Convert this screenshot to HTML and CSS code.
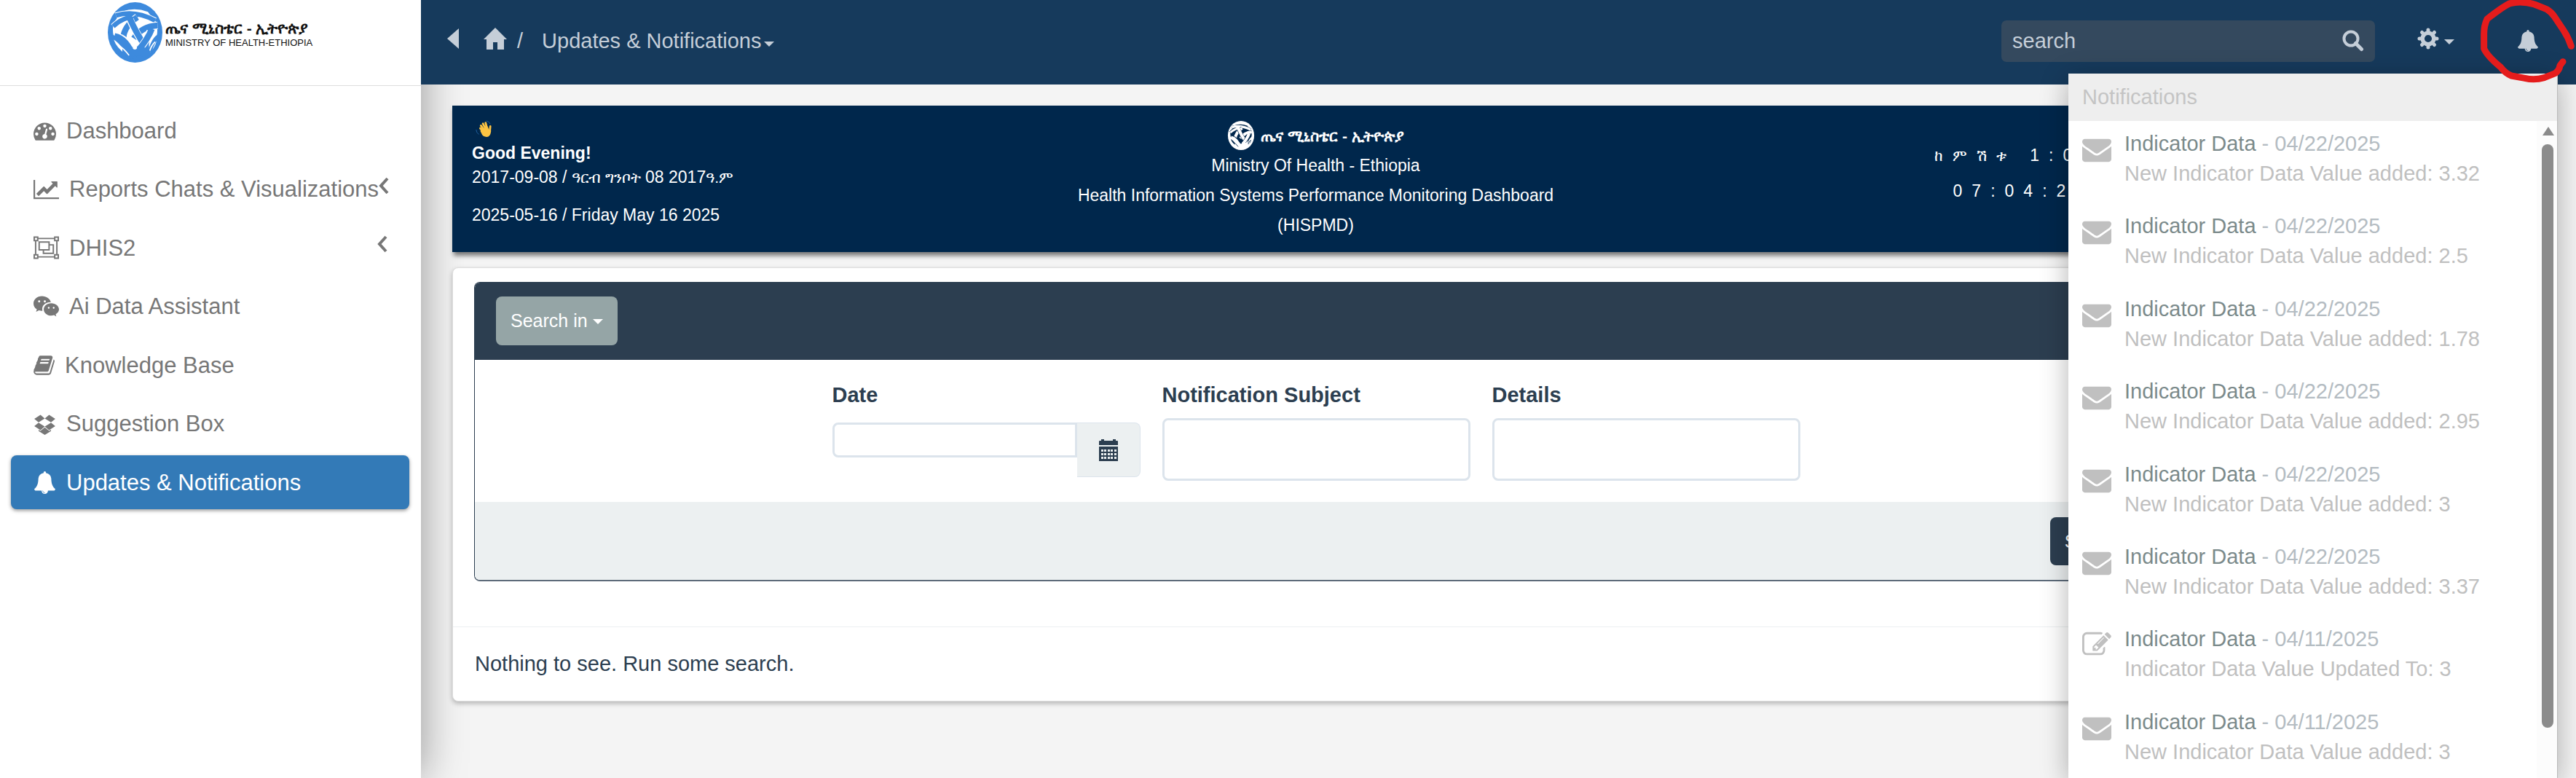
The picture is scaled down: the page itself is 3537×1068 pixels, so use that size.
FILE: index.html
```
<!DOCTYPE html>
<html lang="en">
<head>
<meta charset="utf-8">
<title>Updates &amp; Notifications</title>
<link rel="stylesheet" href="styles.css">
</head>
<body>
<svg class="sprite" aria-hidden="true">
  <symbol id="i-dash" viewBox="0 0 1792 1792"><path d="M384 1152q0-53-37.500-90.500t-90.500-37.500-90.500 37.500-37.500 90.500 37.500 90.500 90.500 37.500 90.500-37.500 37.500-90.500zm192-448q0-53-37.500-90.500t-90.500-37.500-90.500 37.500-37.500 90.500 37.500 90.500 90.500 37.500 90.500-37.500 37.500-90.500zm428 481l101-382q6-26-7.500-48.500t-38.500-29.500-48 6.500-30 39.500l-101 382q-60 5-107 43.500t-63 98.500q-20 77 20 146t117 89 146-20 89-117q16-60-6-117t-72-91zm660-33q0-53-37.500-90.500t-90.500-37.500-90.500 37.500-37.500 90.500 37.500 90.500 90.500 37.500 90.500-37.500 37.500-90.500zm-640-640q0-53-37.500-90.500t-90.500-37.500-90.500 37.500-37.500 90.500 37.500 90.500 90.500 37.500 90.500-37.500 37.500-90.500zm448 192q0-53-37.500-90.500t-90.500-37.500-90.500 37.500-37.500 90.500 37.500 90.500 90.500 37.500 90.500-37.500 37.500-90.500zm320 448q0 261-141 483-19 29-54 29h-1402q-35 0-54-29-141-221-141-483 0-182 71-348t191-286 286-191 348-71 348 71 286 191 191 286 71 348z"/></symbol>
  <symbol id="i-chart" viewBox="0 0 2048 1792"><path d="M2048 1536v128h-2048v-1536h128v1408h1920zm-128-1248v435q0 21-19.500 29.500t-35.500-7.500l-121-121-633 633q-10 10-23 10t-23-10l-233-233-416 416-192-192 585-585q10-10 23-10t23 10l233 233 464-464-121-121q-16-16-7.500-35.500t29.500-19.500h435q14 0 23 9t9 23z"/></symbol>
  <symbol id="i-group" viewBox="0 0 36 32"><g fill="none" stroke="currentColor" stroke-width="2"><path d="M3 6v20M33 6v20M6 3h24M6 29h24"/><path d="M1 1h5v5h-5zM30 1h5v5h-5zM1 26h5v5h-5zM30 26h5v5h-5zM8 8h14v11h-14zM22 12h6v12h-14v-5"/></g></symbol>
  <symbol id="i-chat" viewBox="0 0 36 32"><path d="M12 1C5 1 0 5.500 0 11.500c0 3.400 1.800 6.300 4.700 8.200L3.600 23.300l4.200-2.100c1.600.400 3 .700 4.800.600-1.500-7 4-12.300 12-12.100C23.400 4.700 18.300 1 12 1z"/><path d="M25 11c-6 0-10.500 3.900-10.500 8.800S19 28.600 25 28.600c1.300 0 2.600-.300 3.900-.700l3.300 1.900-.900-3.100c2.800-1.700 4.700-4.200 4.700-6.900C36 15 31 11 25 11z"/><g fill="#fff"><circle cx="8" cy="8.500" r="1.500"/><circle cx="16" cy="8.500" r="1.500"/><circle cx="21.500" cy="17.500" r="1.200"/><circle cx="28.500" cy="17.500" r="1.200"/></g></symbol>
  <symbol id="i-book" viewBox="0 0 1664 1792"><path transform="translate(-60)" d="M1703 478q40 57 18 129l-275 906q-19 64-76.500 107.500t-122.500 43.500h-923q-77 0-148.500-53.500t-99.500-131.500q-24-67-2-127 0-4 3-27t4-37q1-8-3-21.500t-3-19.500q2-11 8-21t16.500-23.500 16.500-23.500q23-38 45-91.500t30-91.500q3-10 .5-30t-.5-28q3-11 17-28t17-23q21-36 42-92t25-90q1-9-2.500-32t.5-28q4-13 22-30.500t22-22.500q19-26 42.500-84.500t27.500-96.500q1-8-3-25.500t-2-26.500q2-8 9-18t18-23 17-21q8-12 16.500-30.500t15-35 16-36 19.500-32 26.500-23.500 36-11.500 47.500 5.500l-1 3q38-9 51-9h761q74 0 114 56t18 130l-274 906q-36 119-71.500 153.500t-128.500 34.500h-869q-27 0-38 15-11 16-1 43 24 70 144 70h923q29 0 56-15.500t35-41.500l300-987q7-22 5-57 38 15 59 43zm-1064 2q-4 13 2 22.500t20 9.500h608q13 0 25.500-9.500t16.500-22.500l21-64q4-13-2-22.500t-20-9.500h-608q-13 0-25.500 9.500t-16.500 22.500zm-83 256q-4 13 2 22.500t20 9.500h608q13 0 25.500-9.500t16.500-22.500l21-64q4-13-2-22.500t-20-9.500h-608q-13 0-25.500 9.500t-16.500 22.500z"/></symbol>
  <symbol id="i-box" viewBox="0 0 1792 1792"><path d="M402 829l494 305-342 285-490-319zm986 555v108l-490 293v1l-1-1-1 1v-1l-489-293v-108l147 96 342-284v-2l1 1 1-1v2l343 284zm-834-1178l342 285-494 304-338-270zm836 623l338 271-489 319-343-285zm-151-623l489 319-338 270-494-304z"/></symbol>
  <symbol id="i-bell" viewBox="0 0 1792 1792"><path d="M912 1696q0-16-16-16-59 0-101.500-42.500t-42.500-101.500q0-16-16-16t-16 16q0 73 51.500 124.500t124.500 51.500q16 0 16-16zm816-288q0 52-38 90t-90 38h-448q0 106-75 181t-181 75-181-75-75-181h-448q-52 0-90-38t-38-90q50-42 91-88t85-119.500 74.500-158.500 50-206 19.500-260q0-152 117-282.500t307-158.500q-8-19-8-39 0-40 28-68t68-28 68 28 28 68q0 20-8 39 190 28 307 158.500t117 282.500q0 139 19.500 260t50 206 74.500 158.500 85 119.500 91 88z"/></symbol>
  <symbol id="i-mail" viewBox="0 0 1792 1792"><path d="M1792 710v794q0 66-47 113t-113 47h-1472q-66 0-113-47t-47-113v-794q44 49 101 87 362 246 497 345 57 42 92.500 65.500t94.500 48 110 24.500h2q51 0 110-24.500t94.500-48 92.500-65.500q170-123 498-345 57-39 100-87zm0-294q0 79-49 151t-122 123q-376 261-468 325-10 7-42.500 31t-54 38.500-52 32.500-57.500 27-50 9h-2q-23 0-50-9t-57.500-27-52-32.500-54-38.500-42.500-31q-91-64-262-182.500t-205-142.500q-62-42-117-115.500t-55-136.500q0-78 41.500-130t118.500-52h1472q65 0 112.500 47t47.500 113z"/></symbol>
  <symbol id="i-edit" viewBox="0 0 1792 1792"><path d="M888 1184l116-116-152-152-116 116v56h96v96h56zm440-720q-16-16-33 1l-350 350q-17 17-1 33t33-1l350-350q17-17 1-33zm80 594v190q0 119-84.500 203.500t-203.500 84.500h-832q-119 0-203.500-84.500t-84.500-203.500v-832q0-119 84.500-203.500t203.500-84.500h832q63 0 117 25 15 7 18 23 3 17-9 29l-49 49q-14 14-32 8-23-6-45-6h-832q-66 0-113 47t-47 113v832q0 66 47 113t113 47h832q66 0 113-47t47-113v-126q0-13 9-22l64-64q15-15 35-7t20 29zm-96-738l288 288-672 672h-288v-288zm444 132l-92 92-288-288 92-92q28-28 68-28t68 28l152 152q28 28 28 68t-28 68z"/></symbol>
  <symbol id="i-home" viewBox="0 0 32 32"><path d="M16 1L0 17h4v14h9V21h6v10h9V17h4z"/></symbol>
  <symbol id="i-search" viewBox="0 0 30 30"><circle cx="12" cy="12" r="9.500" fill="none" stroke="currentColor" stroke-width="4"/><path d="M18.500 18.500l8 8" stroke="currentColor" stroke-width="5" stroke-linecap="round"/></symbol>
  <symbol id="i-gear" viewBox="0 0 30 30"><circle cx="15" cy="15" r="7.800" fill="none" stroke="currentColor" stroke-width="5.500"/><g stroke="currentColor" stroke-width="5" stroke-linecap="round"><path d="M15 3v2M15 25v2M3 15h2M25 15h2M6.500 6.500l1 1M22.500 22.500l1 1M6.500 23.500l1-1M22.500 7.500l1-1"/></g></symbol>
  <symbol id="i-cal" viewBox="0 0 28 30"><path d="M1 3q0-1 1-1h2V0h4v2h12V0h4v2h2q1 0 1 1v5H1zM1 10h26v20H1z"/><g fill="#ecf0f1"><path d="M4 14h3v3H4zM8 14h3v3H8zM13 14h3v3h-3zM17 14h3v3h-3zM22 14h3v3h-3zM4 19h3v3H4zM8 19h3v3H8zM13 19h3v3h-3zM17 19h3v3h-3zM22 19h3v3h-3zM4 24h3v3H4zM8 24h3v3H8zM13 24h3v3h-3zM17 24h3v3h-3zM22 24h3v3h-3z"/></g></symbol>
  <symbol id="i-angle" viewBox="0 0 14 24"><path d="M12 2L3 12l9 10" fill="none" stroke="currentColor" stroke-width="4"/></symbol>
  <symbol id="i-weave" viewBox="0 0 226 250">
    <ellipse cx="113" cy="125" rx="113" ry="125" fill="var(--ink)"/>
    <path fill="var(--paper)" d="M60 38Q113 20 166 40Q175 52 182 62L202 84Q208 120 202 142Q206 175 176 206Q164 170 176 150L113 200L52 150Q62 170 60 205Q22 170 24 140Q18 115 24 84L42 62z"/>
    <g fill="none" stroke-linecap="butt">
      <path d="M34 55Q110 30 196 76M22 100Q60 62 124 56" stroke="var(--paper)" stroke-width="25"/>
      <path d="M34 55Q110 30 196 76M22 100Q60 62 124 56" stroke="var(--ink)" stroke-width="19"/>
      <path d="M64 150Q66 100 122 62M206 96Q140 100 108 150" stroke="var(--paper)" stroke-width="31"/>
      <path d="M64 150Q66 100 122 62M206 96Q140 100 108 150" stroke="var(--ink)" stroke-width="25"/>
      <path d="M92 72Q118 130 152 178" stroke="var(--paper)" stroke-width="31"/>
      <path d="M88 60Q118 130 156 184" stroke="var(--ink)" stroke-width="25"/>
      <path d="M36 142Q80 150 106 216M176 118Q168 150 128 196" stroke="var(--paper)" stroke-width="31"/>
      <path d="M28 140Q80 150 108 232M182 110Q168 150 120 206" stroke="var(--ink)" stroke-width="25"/>
      <path d="M14 140Q60 160 86 220M212 140Q190 150 174 204" stroke="var(--ink)" stroke-width="16"/>
      <path d="M88 214Q113 190 170 214" stroke="var(--ink)" stroke-width="38"/>
      <path d="M38 174Q66 190 88 220M196 164Q180 180 174 200" stroke="var(--paper)" stroke-width="5"/>
    </g>
    <path fill="var(--paper)" d="M112 166Q124 184 120 192Q112 200 104 192Q100 184 112 166z"/>
  </symbol>
</svg>
<div class="app">
  <aside class="sidebar">
    <a class="brand" href="#">
      <svg class="brand-mark"><use href="#i-weave"/></svg>
      <span class="brand-text"><span class="brand-am">ጤና ሚኒስቴር - ኢትዮጵያ</span><span class="brand-en">MINISTRY OF HEALTH-ETHIOPIA</span></span>
    </a>
    <nav class="menu">
      <a class="menu-item" href="#"><svg class="ico"><use href="#i-dash"/></svg>Dashboard</a>
      <a class="menu-item" href="#"><svg class="ico wide"><use href="#i-chart"/></svg>Reports Chats &amp; Visualizations<svg class="angle"><use href="#i-angle"/></svg></a>
      <a class="menu-item" href="#"><svg class="ico wide"><use href="#i-group"/></svg>DHIS2<svg class="angle"><use href="#i-angle"/></svg></a>
      <a class="menu-item" href="#"><svg class="ico wide"><use href="#i-chat"/></svg>Ai Data Assistant</a>
      <a class="menu-item" href="#"><svg class="ico slim"><use href="#i-book"/></svg>Knowledge Base</a>
      <a class="menu-item" href="#"><svg class="ico"><use href="#i-box"/></svg>Suggestion Box</a>
      <a class="menu-item active" href="#"><svg class="ico"><use href="#i-bell"/></svg>Updates &amp; Notifications</a>
    </nav>
  </aside>
  <div class="page">
    <header class="topbar">
      <button class="plain toggle" aria-label="Collapse menu"><svg class="tri" viewBox="0 0 16 28"><path d="M16 0v28L0 14z"/></svg></button>
      <a class="home" href="#" aria-label="Home"><svg class="home-ico"><use href="#i-home"/></svg></a>
      <span class="slash">/</span>
      <button class="plain crumb">Updates &amp; Notifications<span class="caret"></span></button>
      <form class="search"><input type="text" value="search" aria-label="Search"><button class="plain" type="button" aria-label="Run search"><svg class="ico30"><use href="#i-search"/></svg></button></form>
      <button class="plain gear" aria-label="Settings"><svg class="ico30"><use href="#i-gear"/></svg><span class="caret"></span></button>
      <button class="plain bell" aria-label="Notifications"><svg class="ico30"><use href="#i-bell"/></svg></button>
    </header>
    <main class="content">
      <section class="banner">
        <div class="greet">
          <svg class="wave" viewBox="0 0 24 26"><path d="M16 1q5 1 6 5M1 14q0 5 4 7" fill="none" stroke="#1f5f9e"/><g fill="none" stroke="#fcc443" stroke-width="3" stroke-linecap="round"><path d="M8 8l5 7M11 5l4 8M15 4l2 8M7 12l5 6M22 9l-1 8"/></g><path fill="#fcc443" d="M10 13l8-4 2 5 3-3v6q-1 8-7 8-4 0-6-3l-3-6z"/></svg>
          <strong>Good Evening!</strong>
          <p>2017-09-08 / <span class="am">ዓርብ ግንቦት</span> 08 2017<span class="am">ዓ.ም</span></p>
          <p class="greg">2025-05-16 / Friday May 16 2025</p>
        </div>
        <div class="title">
          <div class="title-logo"><svg class="title-mark"><use href="#i-weave"/></svg><b class="am">ጤና ሚኒስቴር - ኢትዮጵያ</b></div>
          <p>Ministry Of Health - Ethiopia</p>
          <p>Health Information Systems Performance Monitoring Dashboard</p>
          <p>(HISPMD)</p>
        </div>
        <div class="clock"><p><span class="am">ከምሽቱ</span> 1:04:25</p><p>07:04:25 PM</p></div>
      </section>
      <section class="card">
        <form class="panel">
          <div class="panel-head"><button class="btn grey" type="button">Search in<span class="caret small"></span></button></div>
          <div class="panel-body">
            <div class="field"><label for="date">Date</label><div class="date-row"><input id="date" type="text"><button class="addon" type="button" aria-label="Pick a date"><svg class="cal"><use href="#i-cal"/></svg></button></div></div>
            <div class="field"><label for="subject">Notification Subject</label><input id="subject" type="text"></div>
            <div class="field"><label for="details">Details</label><input id="details" type="text"></div>
          </div>
          <div class="panel-foot"><button class="btn dark" type="button">Search</button></div>
        </form>
        <p class="empty">Nothing to see. Run some search.</p>
      </section>
    </main>
  </div>
  <section class="drop">
    <h2>Notifications</h2>
    <div class="drop-body">
      <ul>
        <li><svg><use href="#i-mail"/></svg><div><a href="#">Indicator Data</a> - 04/22/2025<p>New Indicator Data Value added: 3.32</p></div></li>
        <li><svg><use href="#i-mail"/></svg><div><a href="#">Indicator Data</a> - 04/22/2025<p>New Indicator Data Value added: 2.5</p></div></li>
        <li><svg><use href="#i-mail"/></svg><div><a href="#">Indicator Data</a> - 04/22/2025<p>New Indicator Data Value added: 1.78</p></div></li>
        <li><svg><use href="#i-mail"/></svg><div><a href="#">Indicator Data</a> - 04/22/2025<p>New Indicator Data Value added: 2.95</p></div></li>
        <li><svg><use href="#i-mail"/></svg><div><a href="#">Indicator Data</a> - 04/22/2025<p>New Indicator Data Value added: 3</p></div></li>
        <li><svg><use href="#i-mail"/></svg><div><a href="#">Indicator Data</a> - 04/22/2025<p>New Indicator Data Value added: 3.37</p></div></li>
        <li><svg><use href="#i-edit"/></svg><div><a href="#">Indicator Data</a> - 04/11/2025<p>Indicator Data Value Updated To: 3</p></div></li>
        <li><svg><use href="#i-mail"/></svg><div><a href="#">Indicator Data</a> - 04/11/2025<p>New Indicator Data Value added: 3</p></div></li>
      </ul>
      <div class="scroll"><svg viewBox="0 0 18 14"><path d="M9 1l8 12H1z"/></svg><span class="thumb"></span></div>
    </div>
  </section>
  <svg class="mark" viewBox="0 0 711 390" aria-hidden="true"><path d="M691 190Q680 155 660 125L622 68Q610 50 590 38L540 18Q485 2 440 14Q420 20 345 78Q332 105 332 140V200Q345 230 400 276Q420 302 445 312L500 322Q540 332 580 320L625 302Q642 290 645 270L657 254"/></svg>
</div>
</body>
</html>
```
FILE: styles.css
```
* { box-sizing: border-box; }
body { margin: 0; font: 29px/41px "Liberation Sans", Arial, sans-serif; color: #2c3e50; background: #f4f4f4; }
p, h2, ul { margin: 0; padding: 0; }
a { color: inherit; text-decoration: none; }
svg { display: block; fill: currentColor; flex: none; }
input, button { font: inherit; color: inherit; }
.sprite { position: absolute; width: 0; height: 0; }
.plain { background: none; border: 0; padding: 0; display: flex; align-items: center; }
.app { position: relative; display: flex; height: 100vh; overflow: hidden; }

.sidebar { width: 578px; flex: none; background: #fff; box-shadow: 0 0 56px rgba(0,0,0,.4); }
.brand { display: flex; height: 118px; padding: 3px 0 0 148px; gap: 4px; border-bottom: 1px solid #ddd; color: #111; }
.brand-mark { width: 75px; height: 83px; --ink: #3d8add; --paper: #fff; }
.brand-text { display: flex; flex-direction: column; padding-top: 24px; }
.brand-am { font-size: 21px; line-height: 24px; font-weight: bold; white-space: nowrap; }
.brand-en { font-size: 13px; line-height: 16px; white-space: nowrap; }
.menu { display: flex; flex-direction: column; justify-content: space-between; height: 581px; padding: 24px 16px 0 15px; }
.menu-item { display: flex; align-items: center; height: 74px; padding: 0 30px 0 31px; border-radius: 8px; color: #777; font-size: 31px; white-space: nowrap; }
.menu-item.active { background: #337ab7; color: #fff; box-shadow: 0 2px 5px rgba(0,0,0,.4); }
.ico { width: 31px; height: 31px; margin-right: 14px; }
.ico.wide { width: 35px; height: 32px; }
.ico.slim { width: 29px; }
.angle { width: 14px; height: 24px; margin-left: auto; margin-bottom: 10px; }

.page { flex: 1; min-width: 0; }
.topbar { position: relative; display: flex; align-items: center; height: 116px; padding: 0 51px 10px 36px; background: #163a5c; color: #c5ced8; }
.tri { width: 16px; height: 28px; }
.home { margin-left: 34px; }
.home-ico { width: 32px; height: 32px; }
.slash { margin: 0 26px 0 14px; padding-top: 6px; }
.crumb { padding-top: 6px; }
.caret { border: 7px solid transparent; border-top-color: currentColor; border-bottom: 0; margin-left: 3px; margin-top: 8px; }
.search { display: flex; align-items: center; width: 513px; height: 57px; margin: 6px 0 0 auto; padding: 0 15px; border-radius: 7px; background: #34495e; }
.search input { flex: 1; min-width: 0; border: 0; padding: 0; background: none; }
.ico30 { width: 30px; height: 30px; }
.gear { margin-left: 58px; }
.gear .caret { margin-left: 7px; }
.bell { margin: 6px 0 0 86px; }

.content { padding: 29px 544px 0 43px; }
.banner { display: grid; grid-template-columns: 1fr 2fr 1fr; height: 201px; padding: 20px 28px 0 27px; background: #00274c; color: #fff; font-size: 23px; line-height: 33px; box-shadow: 2px 5px 6px rgba(0,0,0,.5); white-space: nowrap; }
.am { font-size: 21px; }
.wave { width: 24px; height: 24px; margin-left: 4px; }
.greet strong { display: block; line-height: 34px; margin-top: 4px; }
.greg { margin-top: 19px; }
.title { text-align: center; line-height: 41px; }
.title-logo { display: flex; justify-content: center; align-items: center; gap: 8px; height: 42px; }
.title-mark { width: 38px; height: 40px; --ink: #fff; --paper: #00274c; }
.clock { justify-self: end; text-align: right; letter-spacing: 13px; line-height: 49px; padding: 24px 10px 0 0; }
.card { margin-top: 21px; padding: 19px 29px 0; background: #fff; border: 1px solid #ddd; border-radius: 8px; box-shadow: 0 3px 6px rgba(0,0,0,.25); }
.panel { border: 1px solid #2c3e50; border-bottom: 2px solid #5d6b7a; border-radius: 8px; overflow: hidden; }
.panel-head { height: 106px; padding: 19px 29px; background: #2c3e50; }
.btn { display: flex; align-items: center; height: 67px; padding: 0 20px; border: 0; border-radius: 8px; color: #fff; font-size: 25px; }
.btn.grey { background: #95a5a6; }
.btn.dark { background: #2c3e50; height: 66px; }
.caret.small { margin-left: 7px; margin-top: 2px; }
.panel-body { display: flex; justify-content: center; gap: 30px; height: 195px; padding-top: 28px; }
.field { width: 423px; }
.field label { display: block; font-weight: bold; }
.field input { width: 100%; height: 86px; margin-top: 11px; padding: 0 20px; border: 3px solid #dce4ec; border-radius: 8px; background: #fff; }
.date-row { display: flex; align-items: flex-start; margin-top: 17px; }
.date-row input { flex: 1; min-width: 0; height: 48px; margin: 0; border-radius: 8px 0 0 8px; }
.addon { display: grid; place-items: center; width: 87px; height: 75px; padding: 0; border: 1px solid #dce4ec; border-left: 0; border-radius: 0 8px 8px 0; background: #ecf0f1; }
.cal { width: 28px; height: 30px; }
.panel-foot { display: flex; justify-content: flex-end; height: 107px; padding: 21px 28px; background: #ecf0f1; }
.empty { margin: 62px -29px 0; padding: 30px; border-top: 1px solid #ecf0f1; }

.drop { position: absolute; top: 101px; right: 25px; bottom: 0; width: 672px; background: #fff; color: #b4bcc2; border: 0 solid #bbb; border-right-width: 1px; box-shadow: 0 8px 36px rgba(0,0,0,.3); overflow-y: clip; }
.drop h2 { height: 65px; padding-left: 19px; font-size: 29px; font-weight: normal; line-height: 65px; background: #eee; color: #c4c4c4; }
.drop-body { display: flex; justify-content: space-between; }
.drop ul { display: grid; grid-auto-rows: 1fr; height: 907px; list-style: none; }
.drop li { display: flex; gap: 18px; padding: 11px 0 0 19px; }
.drop li svg { width: 40px; height: 40px; margin-top: 8px; color: #c0c0c0; }
.drop li a { color: #7b8a8b; }
.drop li p { color: #c0c0c0; }
.scroll { width: 28px; padding: 7px 0 0 7px; color: #8b8b8b; background: #fcfcfc; }
.scroll svg { width: 18px; height: 14px; }
.thumb { display: block; width: 16px; height: 801px; margin-top: 11px; border-radius: 8px; background: #8b8b8b; }
.mark { position: absolute; top: 0; right: 0; width: 237px; height: 130px; fill: none; stroke: #e51c1c; stroke-width: 27px; stroke-linecap: round; stroke-linejoin: round; }
```
